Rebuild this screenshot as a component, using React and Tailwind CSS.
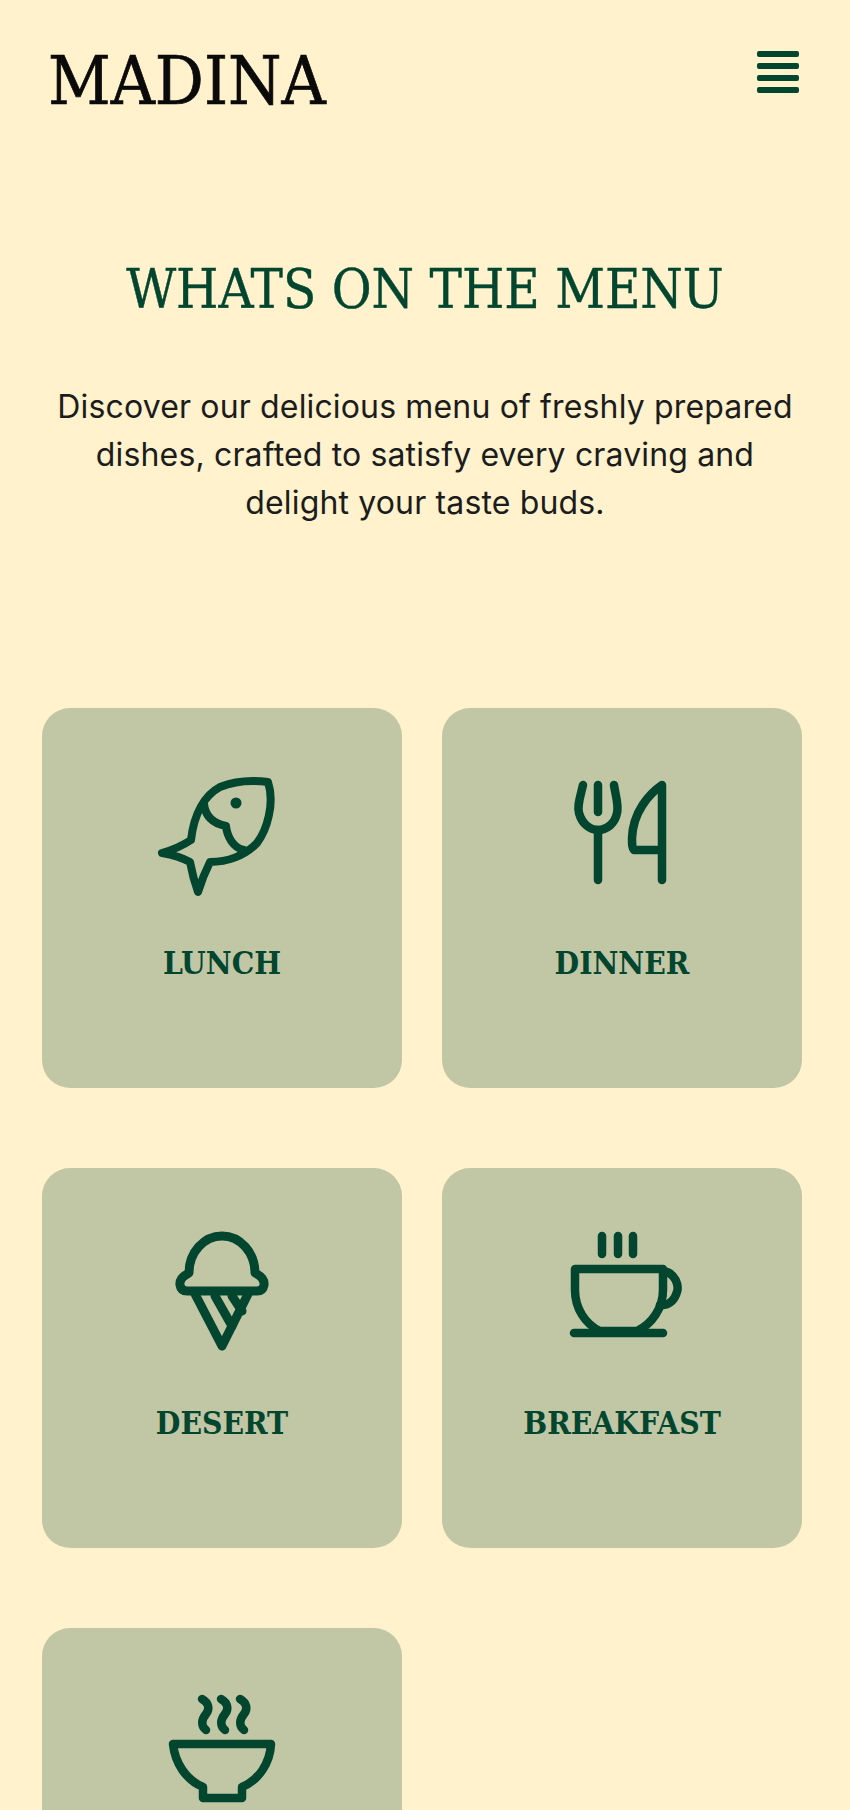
import React from 'react';

const serif = "font-['DejaVu_Serif_Condensed','DejaVu_Serif',serif]";

// icons are drawn in a 130x130 box
const FishIcon = () => (
    <svg viewBox="0 0 130 130" className="w-[130px] h-[130px]" fill="none" stroke="currentColor" strokeWidth="8" strokeLinecap="round" strokeLinejoin="round">
        <path d="M111 14C95 12 78 13 63 19C48 27 37 45 34 72Q22 80 5 85Q22 88 33 94Q36 110 41 124Q46 108 53 94C70 94 88 88 100 75C110 62 118 35 111 14Z" />
        <path d="M47 36C48 46 54 55 69 58C70 68 76 80 87 82" />
        <circle cx="79" cy="35" r="5.5" fill="currentColor" stroke="none" />
    </svg>
);

const DinnerIcon = () => (
    <svg viewBox="0 0 130 130" className="w-[130px] h-[130px]" fill="none" stroke="currentColor" strokeWidth="8.5" strokeLinecap="round" strokeLinejoin="round">
        <path d="M26 17C23 30 20 38 22 45C25 56 33 62 41 62C49 62 58 56 60 45C62 38 59 30 57 17" />
        <path d="M41 17V44M41 62V112" />
        <path d="M105 112V17C92 26 76 44 75 70C75 76 75 80 77 82H105" />
    </svg>
);

const DesertIcon = () => (
    <svg viewBox="0 0 130 130" className="w-[130px] h-[130px]" fill="none" stroke="currentColor" strokeWidth="9" strokeLinecap="round" strokeLinejoin="round">
        <path d="M32 45A33 37 0 0 1 98 45Q108 50 107 57Q106 63 100 63H30Q24 63 23 57Q22 50 32 45Z" />
        <path d="M38 66L65 118L91 66" />
        <path d="M58 68L75 98M75 68L85 83" />
    </svg>
);

const BreakfastIcon = () => (
    <svg viewBox="0 0 130 130" className="w-[130px] h-[130px]" fill="none" stroke="currentColor" strokeWidth="8.5" strokeLinecap="round" strokeLinejoin="round">
        <path d="M45 8V26M61 8V26M76 8V26" />
        <path d="M18 41H106V62C106 80 95 96 80 103H43C28 96 18 80 18 62Z" />
        <path d="M106 43C119 45 122 58 120 64C117 74 110 78 103 77" />
        <path d="M17 105H106" />
    </svg>
);

const SoupIcon = () => (
    <svg viewBox="0 0 130 130" className="w-[130px] h-[130px]" fill="none" stroke="currentColor" strokeWidth="8.5" strokeLinecap="round" strokeLinejoin="round">
        <path d="M45 11C52 15 53 21 49 26C44 32 44 38 49 42" />
        <path d="M64 11C71 15 72 21 68 26C63 32 63 38 68 42" />
        <path d="M83 11C90 15 91 21 87 26C82 32 82 38 87 42" />
        <path d="M16 56H114C113 75 102 92 85 99V110H46V99C29 92 18 75 16 56Z" />
    </svg>
);

const MenuCard = ({ icon, label }) => (
    <div className="h-[380px] bg-[#c1c7a5] rounded-[28px] flex flex-col items-center pt-[60px] text-[#03462f]">
        {icon}
        {label && (
            <h3 className={`${serif} mt-[45px] text-[31.5px] leading-[40px] font-bold`}>{label}</h3>
        )}
    </div>
);

const App = () => {
    return (
        <div className="h-screen overflow-hidden bg-[#fff2cc]">
            {/* Header */}
            <header className="flex justify-between items-start pt-[51px] pl-[48px] pr-[51px]">
                <div className={`${serif} text-[68px] leading-[60px] text-[#0a0a0a] [-webkit-text-stroke:0.7px_#0a0a0a]`}>MADINA</div>
                <button className="flex flex-col gap-[6px] w-[42px]">
                    <span className="h-[6px] bg-[#03462f] rounded-[2px]"></span>
                    <span className="h-[6px] bg-[#03462f] rounded-[2px]"></span>
                    <span className="h-[6px] bg-[#03462f] rounded-[2px]"></span>
                    <span className="h-[6px] bg-[#03462f] rounded-[2px]"></span>
                </button>
            </header>

            {/* Intro */}
            <section className="mt-[144px] px-[42px] text-center">
                <h1 className={`${serif} text-[54px] leading-[70px] text-[#03462f] [-webkit-text-stroke:0.4px_#03462f]`}>WHATS ON THE MENU</h1>
                <p className="mt-[58px] mx-auto max-w-[750px] font-['Inter',sans-serif] text-[32px] leading-[48px] tracking-[0.15px] text-[#1c1c1c]">
                    Discover our delicious menu of freshly prepared dishes, crafted to satisfy every craving and delight your taste buds.
                </p>
            </section>

            {/* Cards */}
            <section className="mt-[181px] pl-[42px] pr-[48px] grid grid-cols-2 gap-x-[40px] gap-y-[80px]">
                <MenuCard icon={<FishIcon />} label="LUNCH" />
                <MenuCard icon={<DinnerIcon />} label="DINNER" />
                <MenuCard icon={<DesertIcon />} label="DESERT" />
                <MenuCard icon={<BreakfastIcon />} label="BREAKFAST" />
                <MenuCard icon={<SoupIcon />} />
            </section>
        </div>
    );
};

export default App;
